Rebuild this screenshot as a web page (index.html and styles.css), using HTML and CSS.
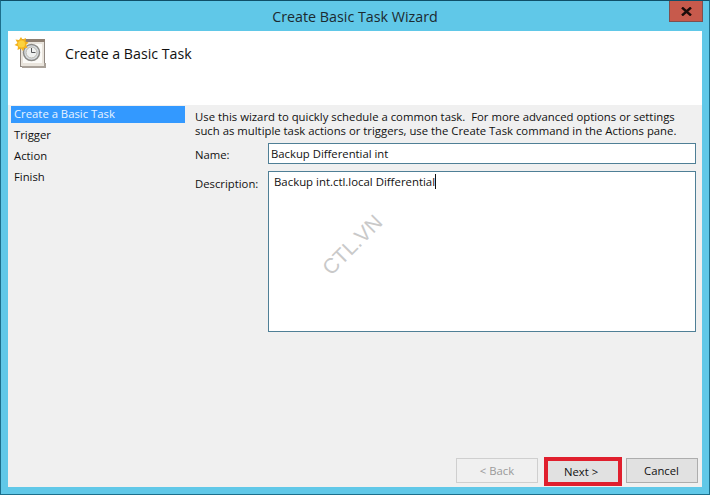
FILE: index.html
```html
<!DOCTYPE html>
<html lang="en">
<head>
<meta charset="utf-8">
<title>Create Basic Task Wizard</title>
<link rel="stylesheet" href="styles.css">
</head>
<body>
<div class="window">
  <div class="titlebar">
    <span class="title">Create Basic Task Wizard</span>
    <div class="close"><svg width="11" height="9" viewBox="0 0 11 9"><path d="M1 0.5 L10 8.5 M10 0.5 L1 8.5" stroke="#1c0c0a" stroke-width="2.4" fill="none"/></svg></div>
  </div>
  <div class="client">
    <div class="header">
      <svg class="task-icon" width="34" height="34" viewBox="0 0 34 34">
        <rect x="6.5" y="2.5" width="24" height="27" fill="#e9e4dc" stroke="#8f8780"/>
        <rect x="6" y="2" width="25" height="3" fill="#8d7f72"/>
        <rect x="9" y="7" width="19" height="19" fill="#fbfaf7"/>
        <path d="M8 30 H31 V26" stroke="#a9a199" stroke-width="2" fill="none"/>
        <circle cx="17.5" cy="15.5" r="8" fill="#d8dde2" stroke="#8b8a86" stroke-width="1.5"/>
        <circle cx="17.5" cy="15.5" r="5.5" fill="#eef0ef" stroke="#b6b4ac"/>
        <path d="M17.5 11 V15.5 H21.5" stroke="#55575a" stroke-width="1" fill="none"/>
        <path d="M7 0 L8.5 2.5 L12 1 L11.5 4.5 L14.5 5.5 L12 8 L13.5 11 L10.5 11 L9 14 L7 11.5 L3.5 13 L4 9.5 L0.5 8 L3.5 6 L1.5 2.5 L5 3 Z" fill="#f4b21d"/>
        <circle cx="7.5" cy="7" r="3.5" fill="#fbd23f"/>
      </svg>
      <h1 class="heading">Create a Basic Task</h1>
    </div>
    <div class="main">
      <ul class="steps">
        <li class="step current">Create a Basic Task</li>
        <li class="step">Trigger</li>
        <li class="step">Action</li>
        <li class="step">Finish</li>
      </ul>
      <div class="panel">
        <p class="intro">Use this wizard to quickly schedule a common task.&nbsp; For more advanced options or settings<br>such as multiple task actions or triggers, use the Create Task command in the Actions pane.</p>
        <div class="field name-field">
          <span class="label">Name:</span>
          <div class="input">Backup Differential int</div>
        </div>
        <div class="field desc-field">
          <span class="label">Description:</span>
          <div class="input area"><span class="typed">Backup int.ctl.local Differential</span></div>
        </div>
        <div class="buttons">
          <div class="btn back">&lt; Back</div>
          <div class="next-mark"><div class="btn next">Next &gt;</div></div>
          <div class="btn cancel">Cancel</div>
        </div>
      </div>
    </div>
    <div class="watermark">CTL.VN</div>
  </div>
</div>
</body>
</html>
```
FILE: styles.css
```css
* { box-sizing: border-box; }
html, body { margin: 0; padding: 0; }
body { width: 710px; height: 495px; overflow: hidden; font-family: "Open Sans", "Noto Sans", sans-serif; font-size: 11.3px; color: #111; }
.window { width: 710px; height: 495px; background: #60c8e8; border: 1px solid #1c6f8c; border-top-color: #0f4f68; display: flex; flex-direction: column; padding: 0 7px 7px; position: relative; }
.titlebar { height: 30px; flex: none; display: flex; align-items: center; justify-content: center; }
.title { font-size: 14.3px; color: #1c2a30; }
.close { position: absolute; top: 0; right: 6px; width: 34px; height: 21px; background: #c75a4c; border: 1px solid #7d5050; border-top: 0; display: flex; align-items: center; justify-content: center; }
.client { flex: 1; display: flex; flex-direction: column; position: relative; background: #f0f0f0; }
.header { height: 74px; flex: none; background: #fff; display: flex; align-items: flex-start; padding: 6px 0 0 6px; }
.task-icon { flex: none; }
.heading { margin: 7px 0 0 17px; font-size: 14.2px; font-weight: 400; color: #111; }
.main { flex: 1; display: flex; min-height: 0; }
.steps { list-style: none; margin: 0 10px 0 3px; padding: 0; width: 174px; flex: none; }
.step { height: 21px; padding-left: 3px; line-height: 15px; }
.step.current { height: 17px; margin-top: 1px; margin-bottom: 4px; background: #3399ff; color: #e8f3ff; }
.panel { flex: 1; display: flex; flex-direction: column; min-width: 0; padding: 5px 4px 4px 0; }
.intro { margin: 0; line-height: 14px; font-size: 11.33px; height: 30px; white-space: nowrap; }
.field { display: flex; }
.label { width: 73px; flex: none; }
.name-field { height: 22px; margin: 2px 2px 0 0; align-items: center; }
.name-field .label { padding-top: 3px; }
.desc-field { height: 161px; margin: 7px 2px 0 0; }
.desc-field .label { padding-top: 5px; }
.input { flex: 1; background: #fff; border: 1px solid #4f7f96; padding: 0 2px; line-height: 19px; }
.area { padding: 0 5px; font-size: 11.4px; }
.typed { border-right: 1px solid #111; }
.buttons { margin-top: auto; display: flex; align-items: flex-start; justify-content: flex-end; height: 25px; }
.btn { height: 25px; display: flex; align-items: center; justify-content: center; background: #e1e1e1; border: 1px solid #adadad; }
.back { width: 82px; background: #f0f0f0; border-color: #cfcfcf; color: #9a9a9a; margin-right: 6px; }
.next-mark { width: 78px; height: 29px; border: 4px solid #e01f2d; margin: -1px 4px 0 0; flex: none; }
.next { height: 21px; border: 0; padding-right: 4px; }
.cancel { width: 72px; padding-right: 1px; }
.watermark { position: absolute; left: 307px; top: 202px; font-family: "Liberation Sans", sans-serif; font-size: 21px; color: #c9c9c9; transform: rotate(-45deg); transform-origin: center; }
```
